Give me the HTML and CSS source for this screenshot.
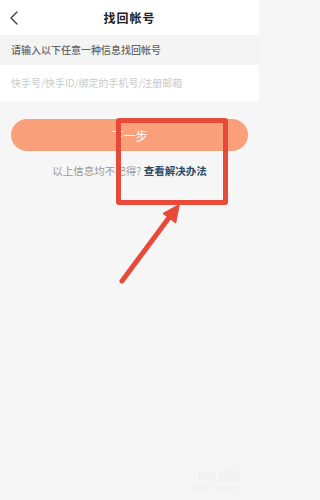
FILE: index.html
```html
<!DOCTYPE html>
<html lang="zh">
<head>
<meta charset="utf-8">
<title>找回帐号</title>
<link rel="stylesheet" href="styles.css">
</head>
<body>
<div class="page">
  <header class="topbar">
    <div class="back">
      <svg width="8" height="14" viewBox="0 0 8 14"><polyline points="7,1 1,7 7,13" fill="none" stroke="#333" stroke-width="1.2" stroke-linejoin="round" stroke-linecap="round"/></svg>
    </div>
    <div class="title">找回帐号</div>
    <div></div>
  </header>
  <div class="label">请输入以下任意一种信息找回帐号</div>
  <div class="field">快手号/快手ID/绑定的手机号/注册邮箱</div>
  <div class="btn">下一步</div>
  <div class="help"><span class="muted">以上信息均不记得?</span> <span class="link">查看解决办法</span></div>
  <div class="watermark"><div class="wm1">Bai 经验</div><div class="wm2">jingyan.baidu.com</div></div>

  <div class="mark-box"></div>
  <svg class="mark-arrow" width="259" height="500" viewBox="0 0 259 500">
    <line x1="122" y1="281" x2="171" y2="215" stroke="#e84a3a" stroke-width="5" stroke-linecap="round"/>
    <polygon points="179,205 163.5,213.5 175.5,222.5" fill="#e84a3a" stroke="#e84a3a" stroke-width="1.5" stroke-linejoin="round"/>
  </svg>
</div>
</body>
</html>
```
FILE: styles.css
```css
html, body {
  margin: 0;
  padding: 0;
}
body {
  background: #f6f6f6;
  font-family: "Noto Sans CJK SC", "Noto Sans", sans-serif;
}
.page {
  position: relative;
  width: 259px;
  height: 500px;
  overflow: hidden;
}
.topbar {
  height: 35px;
  background: #ffffff;
  display: grid;
  grid-template-columns: 1fr auto 1fr;
  align-items: center;
}
.back {
  padding-left: 10px;
  display: flex;
  align-items: center;
}
.title {
  font-size: 12px;
  font-weight: 700;
  color: #222;
  letter-spacing: 1px;
}
.label {
  height: 30px;
  line-height: 30px;
  padding-left: 11px;
  font-size: 10px;
  color: #666;
  font-weight: 500;
  background: #f4f4f4;
}
.field {
  height: 36px;
  line-height: 36px;
  padding-left: 11px;
  background: #ffffff;
  font-size: 10px;
  color: #cacaca;
}
.btn {
  margin: 18px 11px 0;
  height: 32px;
  border-radius: 16px;
  background: #f9a07b;
  color: #ffffff;
  font-size: 12px;
  display: flex;
  align-items: center;
  justify-content: center;
}
.help {
  margin-top: 13px;
  text-align: center;
  font-size: 10.5px;
  line-height: 14px;
}
.muted {
  color: #9a9a9a;
}
.link {
  color: #2b4a68;
  font-weight: 700;
}
.watermark {
  position: absolute;
  right: 14px;
  bottom: 8px;
  text-align: center;
  color: #f0f0f0;
}
.wm1 {
  font-size: 11px;
  font-weight: 700;
}
.wm2 {
  font-size: 6px;
}
.mark-box {
  position: absolute;
  left: 116px;
  top: 118px;
  width: 102px;
  height: 77px;
  border: 5px solid #e84a3a;
  border-radius: 3px;
}
.mark-arrow {
  position: absolute;
  left: 0;
  top: 0;
}
```
